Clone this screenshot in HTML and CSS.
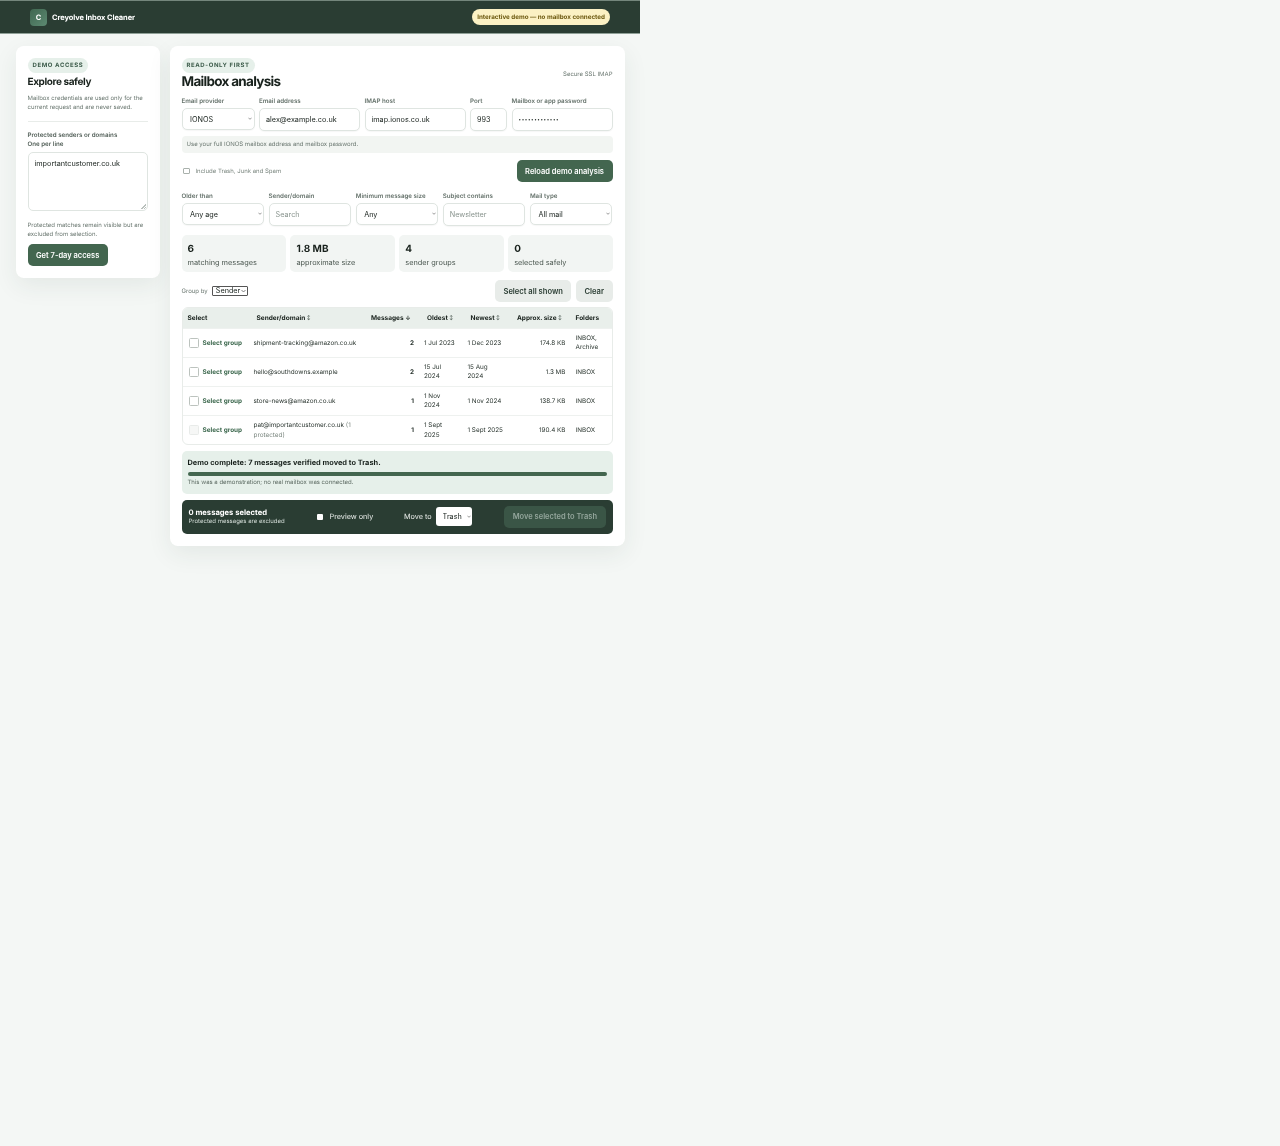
FILE: index.html
```html
<!DOCTYPE html>
<html lang="en">
<head>
    <meta charset="UTF-8">
    <meta name="viewport" content="width=device-width, initial-scale=1.0">
    <title>Creyolve Inbox Cleaner</title>
    <link rel="stylesheet" href="styles.css">
</head>
<body>
    <div class="page">
        <header class="topbar">
            <div class="brand">
                <span class="brand-mark">C</span>
                <span class="brand-name">Creyolve Inbox Cleaner</span>
            </div>
            <span class="demo-pill">Interactive demo — no mailbox connected</span>
        </header>

        <main class="layout">
            <!-- left column -->
            <aside class="card side-card">
                <span class="badge">DEMO ACCESS</span>
                <h2 class="side-title">Explore safely</h2>
                <p class="muted side-note">Mailbox credentials are used only for the current request and are never saved.</p>
                <hr class="side-rule">
                <label class="side-label" for="protected">Protected senders or domains<br>One per line</label>
                <textarea id="protected" class="side-text">importantcustomer.co.uk</textarea>
                <p class="muted side-foot">Protected matches remain visible but are excluded from selection.</p>
                <button class="btn-primary side-btn">Get 7-day access</button>
            </aside>

            <!-- analysis column -->
            <section class="card main-card">
                <div class="main-head">
                    <div>
                        <span class="badge badge-wide">READ-ONLY FIRST</span>
                        <h1 class="main-title">Mailbox analysis</h1>
                    </div>
                    <span class="muted secure">Secure SSL IMAP</span>
                </div>

                <div class="conn-grid">
                    <label class="field"><span>Email provider</span>
                        <select><option>IONOS</option></select></label>
                    <label class="field"><span>Email address</span>
                        <input type="text" value="alex@example.co.uk"></label>
                    <label class="field"><span>IMAP host</span>
                        <input type="text" value="imap.ionos.co.uk"></label>
                    <label class="field"><span>Port</span>
                        <input type="text" value="993"></label>
                    <label class="field"><span>Mailbox or app password</span>
                        <input type="password" class="secret" value="demopassword1"></label>
                </div>

                <p class="hint">Use your full IONOS mailbox address and mailbox password.</p>

                <div class="run-row">
                    <label class="include"><input type="checkbox" class="check"> Include Trash, Junk and Spam</label>
                    <button class="btn-primary">Reload demo analysis</button>
                </div>

                <div class="filter-grid">
                    <label class="field"><span>Older than</span>
                        <select><option>Any age</option></select></label>
                    <label class="field"><span>Sender/domain</span>
                        <input type="text" placeholder="Search"></label>
                    <label class="field"><span>Minimum message size</span>
                        <select><option>Any</option></select></label>
                    <label class="field"><span>Subject contains</span>
                        <input type="text" placeholder="Newsletter"></label>
                    <label class="field"><span>Mail type</span>
                        <select><option>All mail</option></select></label>
                </div>

                <div class="stats">
                    <div class="stat"><strong>6</strong><span>matching messages</span></div>
                    <div class="stat"><strong>1.8 MB</strong><span>approximate size</span></div>
                    <div class="stat"><strong>4</strong><span>sender groups</span></div>
                    <div class="stat"><strong>0</strong><span>selected safely</span></div>
                </div>

                <div class="table-tools">
                    <label class="group-by">Group by
                        <select><option>Sender</option></select></label>
                    <div class="tool-btns">
                        <button class="btn-soft">Select all shown</button>
                        <button class="btn-soft">Clear</button>
                    </div>
                </div>

                <div class="table-wrap">
                    <table class="groups">
                        <colgroup>
                            <col class="col-select"><col class="col-sender"><col class="col-count"><col class="col-old"><col class="col-new"><col class="col-size"><col class="col-folder">
                        </colgroup>
                        <thead>
                            <tr>
                                <th>Select</th>
                                <th class="sort">Sender/domain <i>↕</i></th>
                                <th class="sort">Messages <i class="on">↓</i></th>
                                <th class="sort">Oldest <i>↕</i></th>
                                <th class="sort">Newest <i>↕</i></th>
                                <th class="sort">Approx. size <i>↕</i></th>
                                <th>Folders</th>
                            </tr>
                        </thead>
                        <tbody>
                            <tr>
                                <td><label class="pick"><input type="checkbox" class="check-lg"> Select group</label></td>
                                <td>shipment-tracking@amazon.co.uk</td>
                                <td class="num strong">2</td>
                                <td>1 Jul 2023</td>
                                <td>1 Dec 2023</td>
                                <td class="num">174.8 KB</td>
                                <td>INBOX, Archive</td>
                            </tr>
                            <tr>
                                <td><label class="pick"><input type="checkbox" class="check-lg"> Select group</label></td>
                                <td>hello@southdowns.example</td>
                                <td class="num strong">2</td>
                                <td>15 Jul 2024</td>
                                <td>15 Aug 2024</td>
                                <td class="num">1.3 MB</td>
                                <td>INBOX</td>
                            </tr>
                            <tr>
                                <td><label class="pick"><input type="checkbox" class="check-lg"> Select group</label></td>
                                <td>store-news@amazon.co.uk</td>
                                <td class="num strong">1</td>
                                <td>1 Nov 2024</td>
                                <td>1 Nov 2024</td>
                                <td class="num">138.7 KB</td>
                                <td>INBOX</td>
                            </tr>
                            <tr>
                                <td><label class="pick"><input type="checkbox" class="check-lg" disabled> Select group</label></td>
                                <td>pat@importantcustomer.co.uk <span class="prot">(1 protected)</span></td>
                                <td class="num strong">1</td>
                                <td>1 Sept 2025</td>
                                <td>1 Sept 2025</td>
                                <td class="num">190.4 KB</td>
                                <td>INBOX</td>
                            </tr>
                        </tbody>
                    </table>
                </div>

                <div class="result">
                    <strong>Demo complete: 7 messages verified moved to Trash.</strong>
                    <div class="progress"></div>
                    <p>This was a demonstration; no real mailbox was connected.</p>
                </div>

                <div class="action-bar">
                    <div class="selected">
                        <strong>0 messages selected</strong>
                        <span>Protected messages are excluded</span>
                    </div>
                    <label class="preview"><input type="checkbox" class="check-white"> Preview only</label>
                    <label class="move-to">Move to
                        <select><option>Trash</option></select></label>
                    <button class="btn-move" disabled>Move selected to Trash</button>
                </div>
            </section>
        </main>
    </div>
</body>
</html>
```

FILE: styles.css
```css
* {
    box-sizing: border-box;
}
html, body {
    margin: 0;
    background-color: #f4f7f5;
}
body {
    font-family: 'Inter', 'Liberation Sans', sans-serif;
    font-size: 7px;
    color: #18211c;
    min-height: 1146px;
    text-rendering: geometricPrecision;
}
.page {
    width: 640px;
    will-change: transform;
}
.topbar {
    height: 34px;
    padding: 0 30px;
    display: flex;
    align-items: center;
    justify-content: space-between;
    background-color: #2a3d33;
    border-top: 1px solid #74867c;
    border-bottom: 1px solid #8fa097;
}
.brand {
    display: flex;
    align-items: center;
    gap: 5px;
}
.brand-mark {
    width: 17px;
    height: 17px;
    border-radius: 4px;
    background: linear-gradient(135deg, #3f6650, #5d8a72);
    color: #fff;
    font-size: 7.5px;
    font-weight: 700;
    display: flex;
    align-items: center;
    justify-content: center;
}
.brand-name {
    color: #fff;
    font-size: 7.5px;
    font-weight: 700;
    letter-spacing: -0.1px;
}
.demo-pill {
    padding: 4px 5px;
    height: 16px;
    line-height: 8px;
    border-radius: 8px;
    background-color: #fbf1c4;
    color: #6e5b12;
    font-size: 6.25px;
    font-weight: 700;
    white-space: nowrap;
}
.layout {
    display: flex;
    align-items: flex-start;
    gap: 10px;
    padding: 12px 16px;
}
.card {
    background: #fff;
    border-radius: 8px;
    padding: 12px;
    box-shadow: 0 8px 24px rgba(40, 61, 51, 0.08);
}
.side-card {
    width: 143.5px;
    flex: none;
    padding-left: 11.5px;
}
.main-card {
    width: 455px;
    flex: none;
}
.badge {
    display: block;
    width: fit-content;
    height: 15px;
    line-height: 16.5px;
    padding: 0 5px;
    border-radius: 8px;
    background-color: #e6f0ea;
    color: #3d5c4b;
    font-size: 6px;
    font-weight: 700;
    letter-spacing: 0.6px;
}
.side-title {
    margin: 1.5px 0 0;
    font-size: 10px;
    line-height: 14px;
    font-weight: 700;
    letter-spacing: -0.4px;
}
.muted {
    color: #6a7770;
    font-size: 6px;
    line-height: 9px;
}
.side-note {
    margin: 5.5px 0 0;
}
.side-rule {
    margin: 8.5px 0 9px;
    border: 0;
    border-top: 1px solid #e8ece9;
}
.side-label {
    display: block;
    font-size: 6.2px;
    line-height: 9px;
    font-weight: 600;
    color: #56635c;
}
.side-text {
    display: block;
    width: 100%;
    height: 59px;
    margin-top: 3px;
    padding: 6.5px 6px;
    border: 1px solid #dfe5e1;
    border-radius: 5px;
    font-family: inherit;
    font-size: 7.25px;
    color: #18211c;
}
.side-text::-webkit-resizer {
    background: linear-gradient(135deg, transparent 50%, #b9c0bc 50%, #b9c0bc 62%, transparent 62%, transparent 76%, #b9c0bc 76%, #b9c0bc 88%, transparent 88%) no-repeat right 1px bottom 1px / 5px 5px;
}
.side-foot {
    margin: 10px 0 0;
}
.btn-primary {
    height: 22px;
    padding: 1.5px 8.5px 0;
    border: 0;
    border-radius: 5px;
    background-color: #43664f;
    color: #fff;
    font-family: inherit;
    font-size: 7.5px;
    font-weight: 600;
}
.side-btn {
    display: block;
    margin-top: 5px;
}
.main-head {
    display: flex;
    justify-content: space-between;
    align-items: center;
}
.main-title {
    margin: 1px 0 0;
    font-size: 13.5px;
    line-height: 16px;
    font-weight: 700;
    letter-spacing: -0.7px;
}
.conn-grid,
.filter-grid {
    display: grid;
    gap: 4.5px;
    align-items: start;
}
.conn-grid {
    margin-top: 7.5px;
    grid-template-columns: 73px 1fr 1fr 37px 1fr;
}
.filter-grid {
    margin-top: 11px;
    grid-template-columns: repeat(5, 1fr);
}
.field {
    display: flex;
    flex-direction: column;
    gap: 2.5px;
    min-width: 0;
}
.field > span {
    font-size: 6.2px;
    line-height: 8px;
    font-weight: 600;
    color: #66736c;
    white-space: nowrap;
}
.field input,
.field select {
    width: 100%;
    height: 22.5px;
    padding: 0 6px;
    border: 1px solid #dfe5e1;
    border-radius: 5px;
    background-color: #fff;
    font-family: inherit;
    font-size: 7.25px;
    color: #18211c;
    box-shadow: 0 1px 1px rgba(40, 61, 51, 0.04);
}
.field select {
    height: 21.5px;
    padding: 0.5px 6px 0 7.5px;
}
.field .secret {
    font-size: 4.5px;
    letter-spacing: 0.6px;
}
.field select,
.move-to select,
.group-by select {
    appearance: none;
    background-image: url("data:image/svg+xml,%3Csvg xmlns='http://www.w3.org/2000/svg' width='4' height='3' viewBox='0 0 4 3'%3E%3Cpath d='M.4.7 2 2.3 3.6.7' fill='none' stroke='%23555' stroke-width='.6'/%3E%3C/svg%3E");
    background-repeat: no-repeat;
    background-position: right 1.5px center;
}
.field input::placeholder {
    color: #8a958f;
}
.hint {
    margin: 5px 0 0;
    height: 17px;
    line-height: 17px;
    padding: 0 5px;
    border-radius: 4px;
    background-color: #f2f5f2;
    color: #6a7770;
    font-size: 6px;
}
.run-row {
    margin-top: 7px;
    display: flex;
    align-items: center;
    justify-content: space-between;
}
.include {
    display: flex;
    align-items: center;
    gap: 6px;
    margin-top: 1px;
    padding-left: 1.5px;
    color: #7a867f;
    font-size: 6px;
}
.check,
.check-lg,
.check-white {
    appearance: none;
    margin: 0;
    background-color: #fff;
    flex: none;
}
.check {
    width: 6.5px;
    height: 6.5px;
    border: 1px solid #a9b1ac;
    border-radius: 1px;
}
.check-lg {
    width: 9.5px;
    height: 9.5px;
    margin: -1px 0 0 1.5px;
    border: 1px solid #bcc3be;
    border-radius: 1.5px;
}
.check-lg:disabled {
    border-color: #e8ebe9;
    background-color: #f6f7f6;
}
.check-white {
    width: 6px;
    height: 6px;
    border-radius: 1px;
}
.stats {
    margin-top: 9.5px;
    display: grid;
    grid-template-columns: repeat(4, 1fr);
    gap: 4.5px;
}
.stat {
    height: 37px;
    padding: 7.5px 6px 0;
    border-radius: 5px;
    background-color: #f2f5f3;
}
.stat strong {
    display: block;
    font-size: 10px;
    line-height: 13px;
    font-weight: 700;
}
.stat span {
    display: block;
    margin-top: 1.5px;
    font-size: 7.35px;
    line-height: 11px;
    color: #4b5750;
}
.table-tools {
    margin-top: 8px;
    display: flex;
    align-items: center;
    justify-content: space-between;
}
.group-by {
    color: #6a7770;
    font-size: 6px;
}
.group-by select {
    margin-left: 3px;
    width: 36px;
    height: 10.5px;
    padding: 0 0 0 2.5px;
    line-height: 8px;
    font-family: inherit;
    font-size: 7.25px;
    background-color: #fff;
    background-size: 5px 4px;
    color: #18211c;
    border: 1px solid #555;
    border-radius: 1px;
}
.tool-btns {
    display: flex;
    gap: 4.5px;
}
.btn-soft {
    height: 22px;
    padding: 0 8.5px;
    border: 0;
    border-radius: 5px;
    background-color: #e8ece9;
    color: #2a3d33;
    font-family: inherit;
    font-size: 7.6px;
    font-weight: 600;
}
.table-wrap {
    margin-top: 4.5px;
    border: 1px solid #e8ece9;
    border-radius: 6px;
    overflow: hidden;
}
.groups {
    width: 100%;
    border-collapse: collapse;
    table-layout: fixed;
    font-size: 6.35px;
    line-height: 9.5px;
}
.col-select { width: 66px; }
.col-sender { width: 114.5px; }
.col-count { width: 56px; }
.col-old { width: 43.5px; }
.col-new { width: 46.5px; }
.col-size { width: 61.5px; }
.groups th {
    height: 20.5px;
    padding: 1.5px 5px 0;
    text-align: left;
    background-color: #e9efeb;
    font-weight: 700;
    font-size: 6.5px;
    white-space: nowrap;
}
.groups th.sort {
    padding-left: 8px;
}
.groups th i {
    font-style: normal;
    font-size: 4.5px;
    vertical-align: 1px;
    color: #56635c;
}
.groups th i.on {
    font-size: 6px;
    vertical-align: 0;
    color: #18211c;
}
.groups td {
    height: 29px;
    padding: 1.5px 5px 0;
    border-top: 1px solid #eef1ef;
    color: #2b3630;
}
.groups td.num {
    text-align: right;
}
.groups td.strong {
    font-weight: 700;
}
.pick {
    display: flex;
    align-items: center;
    gap: 4px;
    color: #3f6a50;
    font-size: 6.4px;
    font-weight: 700;
    white-space: nowrap;
}
.prot {
    color: #7a867f;
}
.result {
    margin-top: 5.5px;
    height: 43px;
    padding: 6px 6px 0;
    border-radius: 5px;
    background-color: #e6f0ea;
}
.result strong {
    display: block;
    font-size: 7.4px;
    line-height: 12px;
    font-weight: 700;
}
.progress {
    height: 4px;
    margin: 3px 0 0;
    border-radius: 2px;
    background-color: #43664f;
}
.result p {
    margin: 2px 0 0;
    color: #5c6a62;
    font-size: 6px;
    line-height: 9px;
}
.action-bar {
    margin-top: 6px;
    height: 34px;
    padding: 0 7px;
    border-radius: 5px;
    background-color: #2a3d33;
    color: #fff;
    display: flex;
    align-items: center;
}
.selected {
    width: 128.5px;
    display: flex;
    flex-direction: column;
}
.selected strong {
    font-size: 7.6px;
    line-height: 11px;
    font-weight: 700;
}
.selected span {
    font-size: 6px;
    line-height: 8px;
    color: #d5ded9;
}
.preview {
    width: 87px;
    display: flex;
    align-items: center;
    gap: 6.5px;
    font-size: 7.25px;
    color: #e8ece9;
}
.move-to {
    font-size: 7.25px;
    color: #e8ece9;
    display: flex;
    align-items: center;
    gap: 4.5px;
}
.move-to select {
    width: 36px;
    height: 18.5px;
    padding: 0 3px 0 6.5px;
    border: 0;
    border-radius: 3px;
    background-color: #fff;
    color: #18211c;
    font-family: inherit;
    font-size: 7.25px;
}
.btn-move {
    margin-left: auto;
    height: 22px;
    padding: 0 8.5px;
    border: 0;
    border-radius: 5px;
    background-color: #3a5546;
    color: #93a59b;
    font-family: inherit;
    font-size: 7.5px;
    font-weight: 600;
}
```
